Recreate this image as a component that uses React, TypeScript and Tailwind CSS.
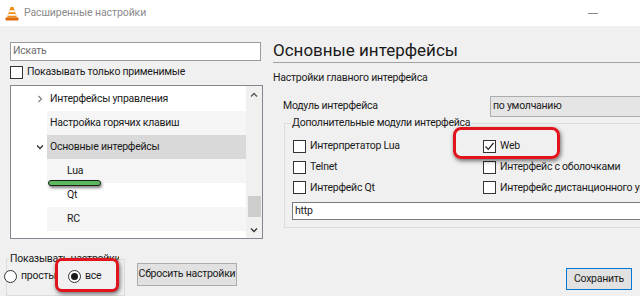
import React from "react";

const rows = [
  { label: "Интерфейсы управления", level: 1, arrow: "right", bg: "bg-white" },
  { label: "Настройка горячих клавиш", level: 1, arrow: "", bg: "bg-[#f5f5f5]" },
  { label: "Основные интерфейсы", level: 1, arrow: "down", bg: "bg-[#d9d9d9]" },
  { label: "Lua", level: 2, arrow: "", bg: "bg-[#f5f5f5]" },
  { label: "Qt", level: 2, arrow: "", bg: "bg-white" },
  { label: "RC", level: 2, arrow: "", bg: "bg-[#f5f5f5]" },
  { label: "Skins", level: 2, arrow: "", bg: "bg-white" },
];

function VlcIcon() {
  return (
    <svg width="14" height="15" viewBox="0 0 14 15">
      <path d="M5.6 1 L8.4 1 L12 11.5 L2 11.5 Z" fill="#f08a12" />
      <path d="M4.7 4.2 L9.3 4.2 L10 6.3 L4 6.3 Z" fill="#fff" />
      <path d="M3.5 8 L10.5 8 L11.1 9.8 L2.9 9.8 Z" fill="#fff" />
      <rect x="0.5" y="11.5" width="13" height="3" rx="0.8" fill="#e06b0a" />
    </svg>
  );
}

function Chevron({ dir }: { dir: string }) {
  if (dir === "right")
    return (
      <svg width="8" height="8" viewBox="0 0 8 8">
        <path d="M2.5 1 L5.5 4 L2.5 7" fill="none" stroke="#808080" strokeWidth="1.2" />
      </svg>
    );
  if (dir === "down")
    return (
      <svg width="8" height="8" viewBox="0 0 8 8">
        <path d="M1 2.5 L4 5.5 L7 2.5" fill="none" stroke="#333" strokeWidth="1.3" />
      </svg>
    );
  if (dir === "up")
    return (
      <svg width="8" height="8" viewBox="0 0 8 8">
        <path d="M1 5.5 L4 2.5 L7 5.5" fill="none" stroke="#555" strokeWidth="1.3" />
      </svg>
    );
  return null;
}

function Checkbox({ checked = false }: { checked?: boolean }) {
  return (
    <div className="w-[13px] h-[13px] border border-[#333] bg-white shrink-0 flex items-center justify-center">
      {checked && (
        <svg width="11" height="11" viewBox="0 0 11 11">
          <path d="M1.5 5.5 L4.3 8.3 L9.5 2" fill="none" stroke="#222" strokeWidth="1.2" />
        </svg>
      )}
    </div>
  );
}

function Radio({ checked = false }: { checked?: boolean }) {
  return (
    <div className="w-[13px] h-[13px] rounded-full border border-[#333] bg-white shrink-0 flex items-center justify-center">
      {checked && <div className="w-[7px] h-[7px] rounded-full bg-[#1a1a1a]" />}
    </div>
  );
}

function CheckItem({ label, checked }: { label: string; checked?: boolean }) {
  return (
    <div className="flex items-center gap-[4px] h-[20.75px] whitespace-nowrap">
      <Checkbox checked={checked} />
      <span>{label}</span>
    </div>
  );
}

export default function App() {
  return (
    <div className="relative w-[640px] h-[296px] overflow-hidden bg-[#f0f0f0] font-['Roboto',sans-serif] text-[10.5px] tracking-[-0.25px] text-[#1a1a1a] leading-none">
      {/* Title bar */}
      <div className="h-[26px] bg-white flex items-center pl-[5px]">
        <VlcIcon />
        <span className="ml-[5px] text-[#8a8a8a] text-[10.5px] tracking-[-0.1px]">Расширенные настройки</span>
        <div className="ml-auto mr-[42px] w-[10px] h-px bg-[#888]" />
      </div>

      <div className="flex h-[270px]">
        {/* Left column */}
        <div className="w-[273px] shrink-0 flex flex-col">
          <div className="mt-[16px] ml-[10px] w-[251px] h-[19px] border border-[#9a9a9a] bg-white flex items-center pl-[2px] text-[#6d6d6d]">
            Искать
          </div>
          <div className="mt-[2px] ml-[10px] h-[20px] flex items-center gap-[4px]">
            <Checkbox />
            <span>Показывать только применимые</span>
          </div>
          <div className="mt-[3px] ml-[10px] w-[253px] h-[158px] border border-[#828790] bg-white flex overflow-hidden">
            <div className="flex-1 pt-px">
              {rows.map((r) => (
                <div key={r.label} className="flex h-[24px]">
                  <div className="w-[36px] shrink-0 flex items-center justify-end pr-[3px]">
                    <Chevron dir={r.arrow} />
                  </div>
                  <div
                    className={`flex-1 flex items-center whitespace-nowrap ${r.bg} ${
                      r.level === 2 ? "pl-[20px]" : "pl-[3px]"
                    }`}
                  >
                    {r.label}
                  </div>
                </div>
              ))}
            </div>
            <div className="w-[16px] shrink-0 bg-[#f0f0f0] flex flex-col items-center">
              <div className="h-[17px] flex items-center">
                <Chevron dir="up" />
              </div>
              <div className="mt-[93px] w-[13px] h-[21px] bg-[#cdcdcd]" />
              <div className="mt-auto h-[17px] flex items-center">
                <Chevron dir="down" />
              </div>
            </div>
          </div>

          {/* Bottom controls */}
          <div className="flex items-start">
            <fieldset className="relative ml-[6px] mt-[13px] w-[119px] min-w-0 h-[44px] border border-[#dcdcdc]">
              <legend className="ml-[2px] px-px max-w-[110px] overflow-hidden leading-[14px] whitespace-nowrap">
                Показывать настройки:
              </legend>
              <div className="-ml-[3px] mt-[4px] flex items-center whitespace-nowrap">
                <Radio />
                <span className="ml-[4px]">простые</span>
              </div>
              {/* annotation box */}
              <div className="absolute left-[48px] -top-[8px] w-[64px] h-[34px] rounded-[7px] border-[3px] border-[#e0141c] bg-[#f0f0f0] shadow-[1px_2px_4px_rgba(0,0,0,0.55)]" />
              <div className="absolute left-[61px] top-[4px] flex items-center z-10 whitespace-nowrap">
                <Radio checked />
                <span className="ml-[4px]">все</span>
              </div>
            </fieldset>
            <button className="ml-[12px] mt-[24px] w-[100px] h-[23px] border border-[#adadad] bg-[#e1e1e1] whitespace-nowrap">
              Сбросить настройки
            </button>
          </div>
        </div>

        {/* Right column */}
        <div className="flex-1 min-w-0 overflow-hidden flex flex-col">
          <div className="mt-[12px] h-[24px] text-[17px] tracking-normal leading-[24px] whitespace-nowrap w-[420px] border-b border-[#a0a0a0] box-content">
            Основные интерфейсы
          </div>
          <div className="mt-[6px] h-[18px] flex items-center">Настройки главного интерфейса</div>
          <div className="mt-[9px] h-[21px] flex items-center whitespace-nowrap">
            <span className="ml-[10px] w-[207px] shrink-0">Модуль интерфейса</span>
            <div className="w-[200px] shrink-0 h-[21px] bg-[#e5e5e5] border border-[#adadad] flex items-center pl-[2px]">
              по умолчанию
            </div>
          </div>
          <fieldset className="ml-[11px] -mt-[1px] w-[420px] shrink-0 border border-[#dcdcdc] pb-[7px]">
            <legend className="ml-[6px] px-px leading-[14px] whitespace-nowrap">Дополнительные модули интерфейса</legend>
            <div className="grid grid-cols-[190px_1fr] mt-[6px] ml-[8px]">
              <CheckItem label="Интерпретатор Lua" />
              <div className="relative">
                <div className="absolute -left-[30px] -top-[9px] w-[107px] h-[32px] rounded-[8px] border-[3px] border-[#e0141c] shadow-[1px_2px_4px_rgba(0,0,0,0.55)]" />
                <CheckItem label="Web" checked />
              </div>
              <CheckItem label="Telnet" />
              <CheckItem label="Интерфейс с оболочками" />
              <CheckItem label="Интерфейс Qt" />
              <CheckItem label="Интерфейс дистанционного управления" />
            </div>
            <div className="mt-[4px] ml-[7px] h-[18px] border border-[#7a7a7a] bg-white flex items-center pl-[2px]">
              http
            </div>
          </fieldset>
          <div className="mt-auto mb-[6px] flex justify-end pr-[8px]">
            <button className="w-[66px] h-[22px] border border-[#0078d7] bg-[#e1e1e1]">Сохранить</button>
          </div>
        </div>
      </div>

      {/* green highlight under Lua */}
      <div className="absolute left-[48px] top-[180px] w-[53px] h-[6px] rounded-full bg-[#5cb85c] border border-[#1e1e1e] shadow-[1px_2px_3px_rgba(0,0,0,0.5)]" />
    </div>
  );
}
